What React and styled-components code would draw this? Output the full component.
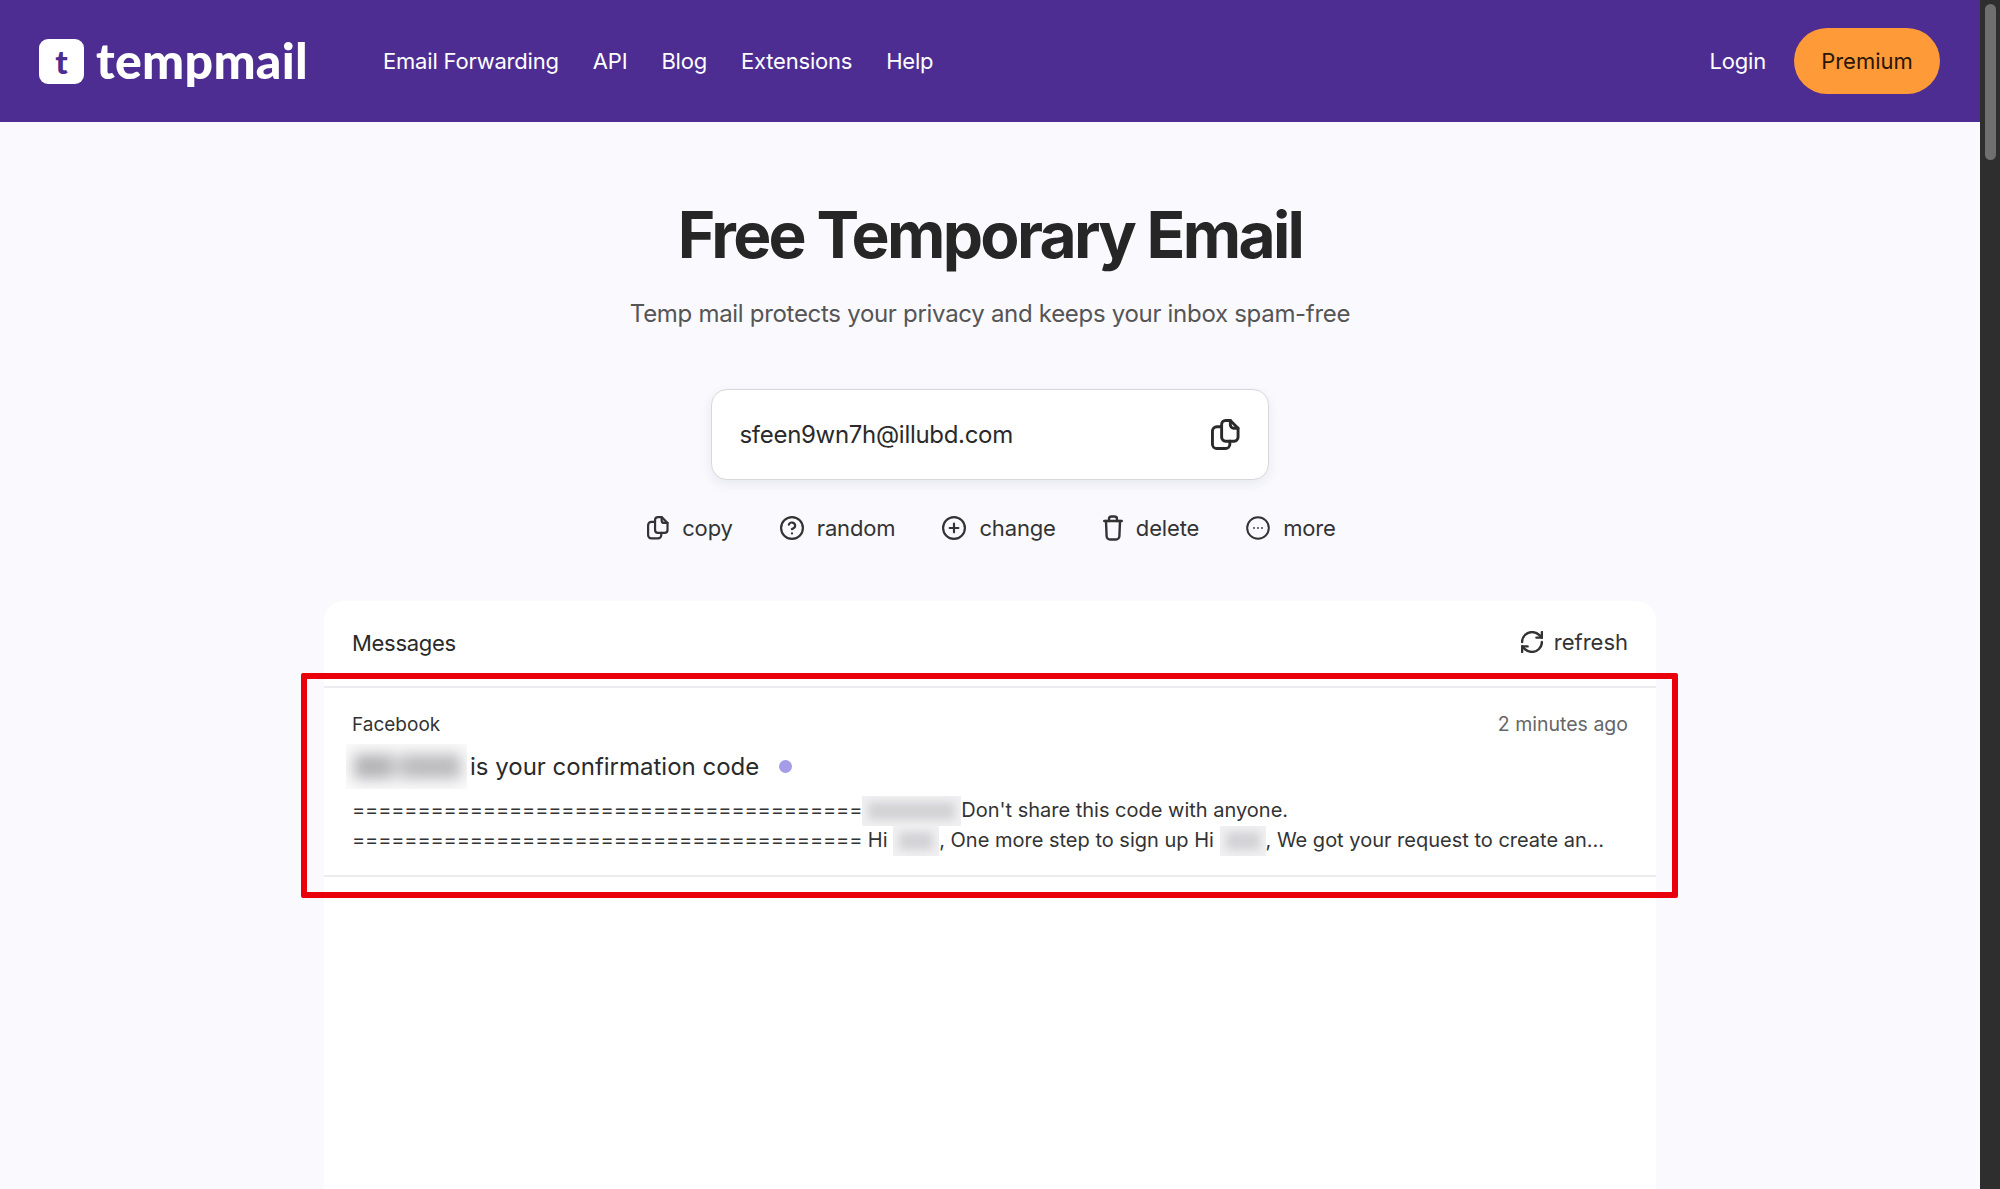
import React from 'react';
import styled, { createGlobalStyle } from 'styled-components';
import { RefreshCw, CircleHelp, CirclePlus } from 'lucide-react';

const GlobalStyle = createGlobalStyle`
  html, body {
    margin: 0;
    height: 100%;
    overflow: hidden;
    background: #f9f9fe;
    font-family: Inter, "Liberation Sans", sans-serif;
  }
  * {
    box-sizing: border-box;
  }
`;

const CopyIcon = ({ size }) => (
  <svg width={size} height={size * 1.1} viewBox="0 0 30 33" fill="none" stroke="currentColor" strokeWidth="3" strokeLinecap="round" strokeLinejoin="round">
    <path d="M11 5.5A4 4 0 0 1 15 1.5H20L28 9.5V19A4 4 0 0 1 24 23H15A4 4 0 0 1 11 19Z" />
    <path d="M20 1.5V6A3.5 3.5 0 0 0 23.5 9.5H28" />
    <path d="M11 8H6A4.5 4.5 0 0 0 1.5 12.5V26A4.5 4.5 0 0 0 6 30.5H15A4.5 4.5 0 0 0 19.5 26V23" />
  </svg>
);

const TrashIcon = () => (
  <svg width="20" height="26" viewBox="0 0 20 26" fill="none" stroke="currentColor" strokeWidth="2.4" strokeLinecap="round" strokeLinejoin="round">
    <path d="M1.2 6H18.8" />
    <path d="M6 6V4A2.5 2.5 0 0 1 8.5 1.5H11.5A2.5 2.5 0 0 1 14 4V6" />
    <path d="M3 6L3.6 21A3.5 3.5 0 0 0 7.1 24.5H12.9A3.5 3.5 0 0 0 16.4 21L17 6" />
  </svg>
);

const MoreIcon = () => (
  <svg width="24" height="24" viewBox="0 0 24 24" fill="none" stroke="currentColor" strokeWidth="2">
    <circle cx="12" cy="12" r="10.8" />
    <circle cx="8" cy="12" r="0.9" fill="currentColor" stroke="none" />
    <circle cx="12" cy="12" r="0.9" fill="currentColor" stroke="none" />
    <circle cx="16" cy="12" r="0.9" fill="currentColor" stroke="none" />
  </svg>
);

// lucide icons, viewBox tightened so the drawing fills the given size
const tight = { viewBox: '1 1 22 22', size: 24, strokeWidth: 2 };

const actions = [
  { label: 'copy', icon: <CopyIcon size={22} /> },
  { label: 'random', icon: <CircleHelp {...tight} /> },
  { label: 'change', icon: <CirclePlus {...tight} /> },
  { label: 'delete', icon: <TrashIcon /> },
  { label: 'more', icon: <MoreIcon /> },
];

const App = () => {
  return (
    <>
      <GlobalStyle />
      <Screen>
        <Page>
          <Header>
            <Logo>
              <LogoMark>t</LogoMark>
              <LogoText>tempmail</LogoText>
            </Logo>
            <Nav>
              <NavLink>Email Forwarding</NavLink>
              <NavLink>API</NavLink>
              <NavLink>Blog</NavLink>
              <NavLink>Extensions</NavLink>
              <NavLink>Help</NavLink>
            </Nav>
            <HeaderRight>
              <NavLink>Login</NavLink>
              <PremiumButton>Premium</PremiumButton>
            </HeaderRight>
          </Header>

          <Main>
            <Title>Free Temporary Email</Title>
            <Subtitle>Temp mail protects your privacy and keeps your inbox spam-free</Subtitle>

            <EmailBox>
              <EmailText>sfeen9wn7h@illubd.com</EmailText>
              <CopyIcon size={29} />
            </EmailBox>

            <Actions>
              {actions.map((a) => (
                <Action key={a.label}>
                  {a.icon}
                  {a.label}
                </Action>
              ))}
            </Actions>

            <Card>
              <CardHead>
                <CardTitle>Messages</CardTitle>
                <Refresh>
                  <RefreshCw viewBox="2 2 20 20" size={22} strokeWidth={2.2} />
                  refresh
                </Refresh>
              </CardHead>

              <MessageRow>
                <RedFrame />
                <MetaRow>
                  <Sender>Facebook</Sender>
                  <Time>2 minutes ago</Time>
                </MetaRow>
                <Subject>
                  <SubjectSmudge />
                  is your confirmation code
                  <UnreadDot />
                </Subject>
                <Preview>
                  <PreviewLine>
                    <Rule>{'='.repeat(39)}</Rule>
                    <Smudge $w={99} />
                    Don't share this code with anyone.
                  </PreviewLine>
                  <PreviewLine>
                    <Rule>{'='.repeat(39)}</Rule> Hi <Smudge $w={46} />, One more step to sign up Hi <Smudge $w={46} />, We got your request to create an...
                  </PreviewLine>
                </Preview>
              </MessageRow>
            </Card>
          </Main>
        </Page>
        <ScrollTrack>
          <ScrollThumb />
        </ScrollTrack>
      </Screen>
    </>
  );
};

export default App;

const Screen = styled.div`
  display: flex;
  width: 2000px;
  height: 1189px;
  overflow: hidden;
`;

const Page = styled.div`
  flex: 1;
  min-width: 0;
  display: flex;
  flex-direction: column;
  background: #f9f9fe;
`;

const ScrollTrack = styled.div`
  width: 20px;
  padding: 4px 4px 0 5px;
  background: #2e2e2e;
`;

const ScrollThumb = styled.div`
  height: 156px;
  border-radius: 6px;
  background: #6f6f6f;
`;

const Header = styled.header`
  flex: none;
  height: 122px;
  display: flex;
  align-items: center;
  padding: 0 40px 0 39px;
  background: #4e2d92;
`;

const Logo = styled.div`
  display: flex;
  align-items: center;
  gap: 12px;
  width: 344px;
`;

const LogoMark = styled.div`
  width: 45px;
  height: 45px;
  display: flex;
  align-items: center;
  justify-content: center;
  border-radius: 9px;
  background: #fff;
  color: #4e2d92;
  font-family: Lato, sans-serif;
  font-size: 33px;
  font-weight: 900;
`;

const LogoText = styled.div`
  margin-top: -3px;
  color: #fff;
  font-family: Lato, sans-serif;
  font-size: 50px;
  font-weight: 900;
  line-height: 1;
  letter-spacing: 0.3px;
`;

const Nav = styled.nav`
  display: flex;
  gap: 34px;
`;

const NavLink = styled.a`
  color: #fff;
  font-size: 22px;
  font-weight: 400;
  letter-spacing: -0.2px;
`;

const HeaderRight = styled.div`
  margin-left: auto;
  display: flex;
  align-items: center;
  gap: 28px;
`;

const PremiumButton = styled.button`
  width: 146px;
  height: 66px;
  border: none;
  border-radius: 33px;
  background: #fe9a37;
  color: #2a1608;
  font-family: inherit;
  font-size: 22px;
  font-weight: 400;
`;

const Main = styled.main`
  flex: 1;
  display: flex;
  flex-direction: column;
  align-items: center;
  padding-top: 72px;
`;

const Title = styled.h1`
  margin: 0;
  color: #262626;
  font-size: 64px;
  font-weight: 700;
  line-height: 82px;
  letter-spacing: -0.042em;
`;

const Subtitle = styled.p`
  margin: 20px 0 0;
  color: #555;
  font-size: 24px;
  line-height: 36px;
  letter-spacing: -0.3px;
`;

const EmailBox = styled.div`
  width: 558px;
  height: 91px;
  margin: 57px 1px 0 0;
  display: flex;
  align-items: center;
  justify-content: space-between;
  padding: 0 28px;
  border: 1px solid #d8d8dc;
  border-radius: 16px;
  background: #fff;
  box-shadow: 0 4px 12px rgba(40, 40, 80, 0.08);
  color: #2a2a2a;
`;

const EmailText = styled.span`
  font-size: 24px;
  letter-spacing: -0.3px;
`;

const Actions = styled.div`
  display: flex;
  gap: 47px;
  margin-top: 33px;
  padding-left: 3px;
`;

const Action = styled.div`
  display: flex;
  align-items: center;
  gap: 13px;
  color: #333;
  font-size: 22px;
  font-weight: 400;
  line-height: 30px;
  letter-spacing: -0.15px;
`;

const Card = styled.section`
  flex: 1;
  width: 1332px;
  margin-top: 58px;
  border-radius: 20px 20px 0 0;
  background: #fff;
`;

const CardHead = styled.div`
  height: 87px;
  display: flex;
  align-items: center;
  justify-content: space-between;
  padding: 0 28px 2px;
  border-bottom: 2px solid #ececf0;
`;

const CardTitle = styled.div`
  color: #2a2a2a;
  font-size: 22px;
  font-weight: 400;
  letter-spacing: -0.3px;
`;

const Refresh = styled.div`
  display: flex;
  align-items: center;
  gap: 11px;
  margin-bottom: 2px;
  color: #333;
  font-size: 22px;
  font-weight: 400;
`;

const MessageRow = styled.div`
  position: relative;
  height: 189px;
  padding: 22px 28px 0;
  border-bottom: 2px solid #ececf0;
`;

const RedFrame = styled.div`
  position: absolute;
  top: -15px;
  left: -23px;
  right: -22px;
  bottom: -23px;
  border: 6px solid #e9000a;
  border-radius: 2px;
  pointer-events: none;
`;

const MetaRow = styled.div`
  display: flex;
  align-items: baseline;
  justify-content: space-between;
  line-height: 28px;
`;

const Sender = styled.span`
  color: #333;
  font-size: 19px;
`;

const Time = styled.span`
  color: #666;
  font-size: 19.5px;
`;

const Subject = styled.div`
  display: flex;
  align-items: center;
  margin-top: 5px;
  color: #2a2a2a;
  font-size: 24px;
  line-height: 40px;
`;

const SubjectSmudge = styled.span`
  position: relative;
  width: 121px;
  height: 45px;
  margin: 0 3px 0 -6px;
  overflow: hidden;
  background: #fafafb;

  &::before {
    content: '';
    position: absolute;
    inset: 10px 6px 10px 8px;
    background: linear-gradient(90deg, #b4b4b6 0 30%, #d8d8da 40%, #bcbcbe 50% 100%);
    filter: blur(7px);
  }
`;

const UnreadDot = styled.span`
  width: 13px;
  height: 13px;
  margin-left: 20px;
  border-radius: 50%;
  background: #a59ce8;
`;

const Preview = styled.div`
  margin-top: 7px;
  color: #333;
  font-size: 20px;
  line-height: 29px;
`;

const PreviewLine = styled.div`
  white-space: nowrap;
`;

const Rule = styled.span`
  font-variant-ligatures: none;
  font-feature-settings: 'calt' 0;
  letter-spacing: -0.15px;
`;

const Smudge = styled.span`
  position: relative;
  display: inline-block;
  width: ${(p) => p.$w}px;
  height: 30px;
  vertical-align: top;
  overflow: hidden;
  background: #f1f1f3;

  &::before {
    content: '';
    position: absolute;
    inset: 6px;
    background: #d2d2d5;
    filter: blur(5px);
  }
`;
